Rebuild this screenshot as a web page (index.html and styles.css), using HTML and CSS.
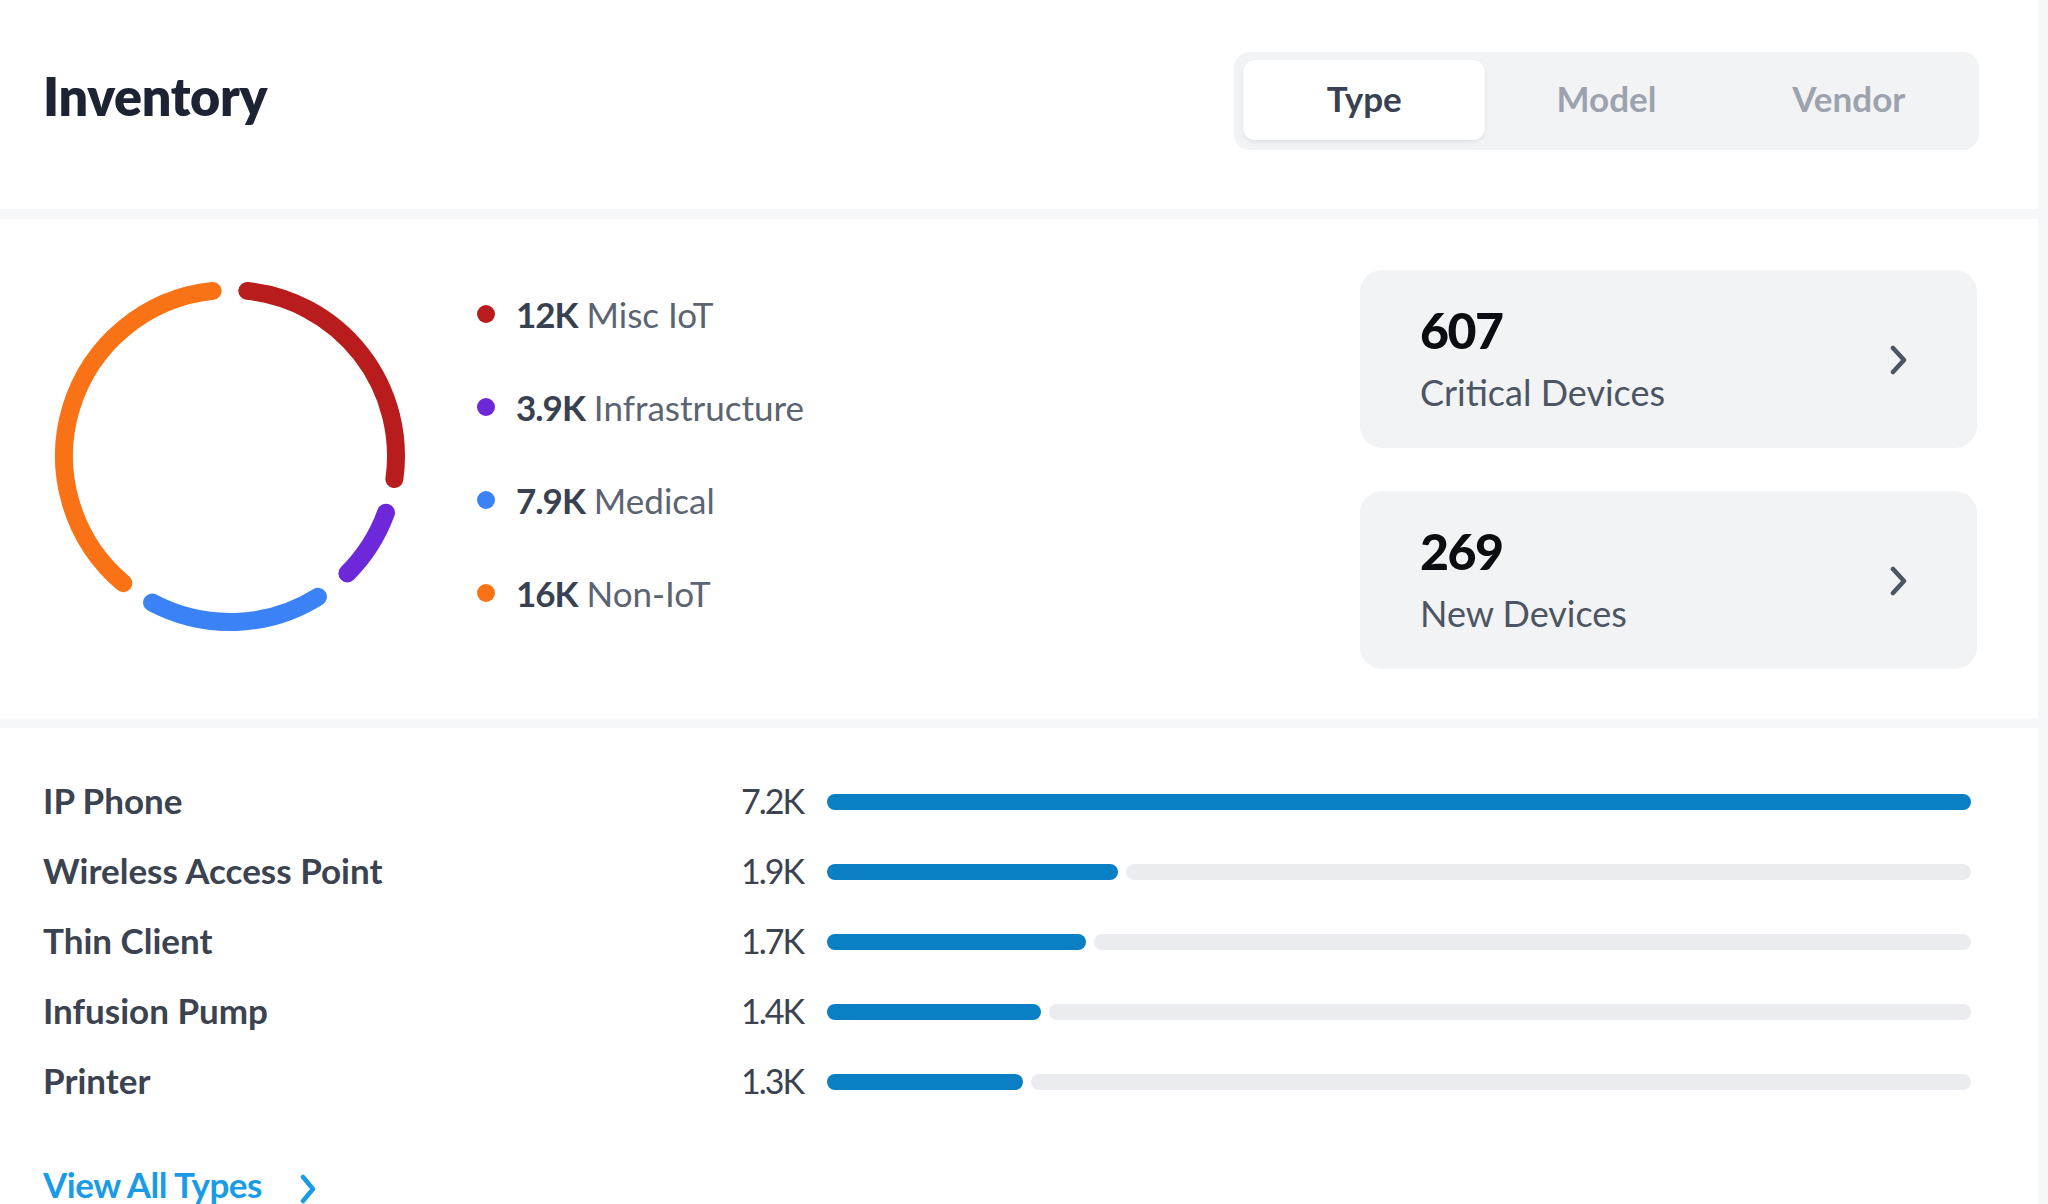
FILE: index.html
```html
<!DOCTYPE html>
<html lang="en">
<head>
<meta charset="utf-8">
<title>Inventory</title>
<link rel="stylesheet" href="styles.css">
</head>
<body>
<div class="panel">
  <header class="section header">
    <h1 class="title">Inventory</h1>
    <div class="segmented">
      <button class="tab active">Type</button>
      <button class="tab">Model</button>
      <button class="tab">Vendor</button>
    </div>
  </header>

  <section class="section overview">
    <svg class="donut" width="352" height="352" viewBox="0 0 352 352">
      <g fill="none" stroke-width="18" stroke-linecap="round">
        <path stroke="#b91c1c" d="M193.35 10.91 A166 166 0 0 1 340.39 199.11"/>
        <path stroke="#6d28d9" d="M331.99 232.77 A166 166 0 0 1 293.38 293.38"/>
        <path stroke="#3b82f6" d="M263.97 316.77 A166 166 0 0 1 98.06 322.57"/>
        <path stroke="#f97316" d="M69.30 303.16 A166 166 0 0 1 158.65 10.91"/>
      </g>
    </svg>
    <ul class="legend">
      <li class="legend-item"><span class="dot dot-red"></span><b>12K</b> Misc IoT</li>
      <li class="legend-item"><span class="dot dot-purple"></span><b>3.9K</b> Infrastructure</li>
      <li class="legend-item"><span class="dot dot-blue"></span><b>7.9K</b> Medical</li>
      <li class="legend-item"><span class="dot dot-orange"></span><b>16K</b> Non-IoT</li>
    </ul>
    <div class="stats">
      <a class="stat-card">
        <div class="stat-text">
          <div class="stat-num">607</div>
          <div class="stat-label">Critical Devices</div>
        </div>
        <svg class="chev" width="20" height="30" viewBox="0 0 20 30"><path d="M4 3 L15 15 L4 27" fill="none" stroke="#4b5563" stroke-width="4.5" stroke-linecap="round" stroke-linejoin="round"/></svg>
      </a>
      <a class="stat-card">
        <div class="stat-text">
          <div class="stat-num">269</div>
          <div class="stat-label">New Devices</div>
        </div>
        <svg class="chev" width="20" height="30" viewBox="0 0 20 30"><path d="M4 3 L15 15 L4 27" fill="none" stroke="#4b5563" stroke-width="4.5" stroke-linecap="round" stroke-linejoin="round"/></svg>
      </a>
    </div>
  </section>

  <section class="section types">
    <div class="rows">
      <div class="row">
        <span class="row-label">IP Phone</span>
        <span class="row-value">7.2K</span>
        <div class="bar"><div class="fill" style="width:100%"></div></div>
      </div>
      <div class="row">
        <span class="row-label">Wireless Access Point</span>
        <span class="row-value">1.9K</span>
        <div class="bar"><div class="fill" style="width:25.4%"></div><div class="track"></div></div>
      </div>
      <div class="row">
        <span class="row-label">Thin Client</span>
        <span class="row-value">1.7K</span>
        <div class="bar"><div class="fill" style="width:22.6%"></div><div class="track"></div></div>
      </div>
      <div class="row">
        <span class="row-label">Infusion Pump</span>
        <span class="row-value">1.4K</span>
        <div class="bar"><div class="fill" style="width:18.7%"></div><div class="track"></div></div>
      </div>
      <div class="row">
        <span class="row-label">Printer</span>
        <span class="row-value">1.3K</span>
        <div class="bar"><div class="fill" style="width:17.1%"></div><div class="track"></div></div>
      </div>
    </div>
    <a class="view-all">View All Types
      <svg class="link-chev" width="20" height="32" viewBox="0 0 20 32"><path d="M5 4 L15 16 L5 28" fill="none" stroke="#1a9be6" stroke-width="4.5" stroke-linecap="round" stroke-linejoin="round"/></svg>
    </a>
  </section>
</div>
</body>
</html>
```

FILE: styles.css
```css
* { box-sizing: border-box; }

html, body {
  margin: 0;
  padding: 0;
}

body {
  background: #f6f7f9;
  font-family: "Lato", "Noto Sans", sans-serif;
  color: #374151;
  width: 2048px;
  height: 1204px;
  overflow: hidden;
}

.panel {
  width: 2038px;
  display: flex;
  flex-direction: column;
  gap: 10px;
}

.section {
  background: #ffffff;
}

/* Header */
.header {
  height: 209px;
  display: flex;
  align-items: flex-start;
  justify-content: space-between;
  padding: 52px 59px 0 43px;
}

.title {
  margin: 11px 0 0 0;
  font-size: 52px;
  line-height: 66px;
  font-weight: 800;
  color: #1c2434;
  letter-spacing: -0.3px;
}

.segmented {
  width: 745px;
  height: 98px;
  padding: 8px 9px 10px 9px;
  background: #f2f3f5;
  border-radius: 16px;
  display: grid;
  grid-template-columns: repeat(3, 1fr);
}

.tab {
  border: 0;
  background: transparent;
  font-family: inherit;
  font-size: 35px;
  font-weight: 700;
  color: #9ca3af;
  border-radius: 12px;
  padding: 0 0 5px 0;
}

.tab.active {
  background: #ffffff;
  color: #374151;
  box-shadow: 0 2px 4px rgba(17, 24, 39, 0.08);
}

/* Overview */
.overview {
  height: 499px;
  display: flex;
  align-items: flex-start;
  padding: 51px 61px 49px 54px;
}

.donut {
  display: block;
  margin-top: 10px;
  flex: none;
}

.legend {
  list-style: none;
  margin: 21px 0 0 71px;
  padding: 0;
  display: flex;
  flex-direction: column;
  gap: 47px;
}

.legend-item {
  height: 46px;
  display: flex;
  align-items: center;
  font-size: 35px;
  color: #5b6472;
  white-space: pre;
}

.legend-item b {
  font-weight: 700;
  color: #374151;
  letter-spacing: -1px;
}

.dot {
  width: 18px;
  height: 18px;
  border-radius: 50%;
  margin-right: 21px;
  flex: none;
}

.dot-red { background: #b91c1c; }
.dot-purple { background: #6d28d9; }
.dot-blue { background: #3b82f6; }
.dot-orange { background: #f97316; }

.stats {
  margin-left: auto;
  width: 617px;
  display: flex;
  flex-direction: column;
  gap: 43px;
}

.stat-card {
  height: 178px;
  background: #f2f3f5;
  border-radius: 22px;
  display: flex;
  align-items: center;
  justify-content: space-between;
  padding: 0 68px 0 60px;
}

.stat-text {
  display: flex;
  flex-direction: column;
  gap: 15px;
}

.stat-num {
  font-size: 50px;
  line-height: 50px;
  font-weight: 900;
  color: #0b0d12;
  letter-spacing: -1.5px;
}

.stat-label {
  font-size: 36px;
  line-height: 44px;
  color: #4b5563;
}

.chev {
  display: block;
  margin-top: 2px;
}

/* Types */
.types {
  flex: 1;
  height: 476px;
  padding: 37px 67px 0 43px;
}

.row {
  height: 70px;
  display: grid;
  grid-template-columns: 1fr auto 1144px;
  column-gap: 22px;
  align-items: center;
}

.row-label {
  font-size: 35px;
  font-weight: 700;
  color: #3b4250;
}

.row-value {
  font-size: 34px;
  color: #3b4250;
  letter-spacing: -2px;
  text-align: right;
  margin-right: 2px;
}

.bar {
  height: 16px;
  display: flex;
  margin-top: 4px;
}

.fill {
  height: 16px;
  background: #0b7fc4;
  border-radius: 8px;
  flex: none;
}

.track {
  flex: 1;
  height: 16px;
  margin-left: 8px;
  background: #ebecf0;
  border-radius: 8px;
}

.view-all {
  margin-top: 47px;
  display: inline-flex;
  align-items: center;
  gap: 36px;
  height: 44px;
  font-size: 35px;
  font-weight: 700;
  color: #1a9be6;
  letter-spacing: -0.5px;
}

.link-chev {
  display: block;
  margin-top: 10px;
}
```
